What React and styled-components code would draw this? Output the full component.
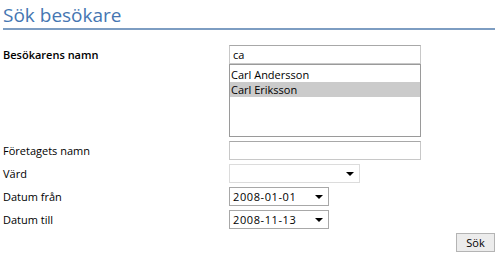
import React from 'react';
import styled, { createGlobalStyle } from 'styled-components';

const Global = createGlobalStyle`
    body {
        margin: 0;
        background: #ffffff;
        font-family: "Open Sans", "DejaVu Sans", sans-serif;
        font-size: 11px;
        color: #000;
    }
`

const Page = styled.div`
    width: 500px;
    height: 269px;
    box-sizing: border-box;
    padding: 4px 4px 0 3px;
`

const Heading = styled.h1`
    margin: 0;
    font-weight: normal;
    font-size: 19px;
    color: #4576b2;
    line-height: 22px;
    padding-bottom: 2px;
    border-bottom: 2px solid #7d9dc2;
    margin-right: 1px;
`

const Form = styled.div`
    display: grid;
    grid-template-columns: 226px 1fr;
    row-gap: 4px;
    margin-top: 15px;
`

const Label = styled.div`
    font-weight: ${p => (p.bold ? 600 : 'normal')};
    align-self: ${p => (p.top ? 'start' : 'center')};
    padding-top: ${p => (p.top ? '2px' : '0')};
`

const Field = styled.div`
    display: flex;
    flex-direction: column;
`

const TextInput = styled.div`
    width: 192px;
    height: 19px;
    box-sizing: border-box;
    border: 1px solid #c8c8c8;
    border-top-color: #a8a8a8;
    padding: 1px 3px;
    line-height: 15px;
`

const ListBox = styled.div`
    width: 192px;
    height: 73px;
    box-sizing: border-box;
    border: 1px solid #9a9a9a;
    padding-top: 2px;
`

const Option = styled.div`
    height: 15px;
    line-height: 15px;
    padding-left: 1px;
    background: ${p => (p.selected ? '#cbcbcb' : 'transparent')};
`

const Select = styled.div`
    width: ${p => p.width}px;
    height: 19px;
    box-sizing: border-box;
    border: 1px solid ${p => (p.empty ? '#dcdcdc' : '#a8a8a8')};
    display: flex;
    align-items: center;
    justify-content: space-between;
    padding: 0 5px 0 3px;
    letter-spacing: 0.6px;
`

const Arrow = styled.span`
    width: 0;
    height: 0;
    border-left: 4px solid transparent;
    border-right: 4px solid transparent;
    border-top: 4px solid #000;
`

const Actions = styled.div`
    display: flex;
    justify-content: flex-end;
    margin-top: 4px;
    padding-right: 1px;
`

const Button = styled.button`
    font-family: inherit;
    font-size: 11px;
    width: 39px;
    height: 19px;
    padding: 0;
    background: #ececec;
    border: 1px solid #b4b4b4;
    color: #000;
`

export default function App() {
    return (
        <Page>
            <Global />
            <Heading>Sök besökare</Heading>
            <Form>
                <Label bold top>Besökarens namn</Label>
                <Field>
                    <TextInput>ca</TextInput>
                    <ListBox>
                        <Option>Carl Andersson</Option>
                        <Option selected>Carl Eriksson</Option>
                    </ListBox>
                </Field>
                <Label>Företagets namn</Label>
                <TextInput />
                <Label>Värd</Label>
                <Select width={131} empty><span /><Arrow /></Select>
                <Label>Datum från</Label>
                <Select width={100}>2008-01-01<Arrow /></Select>
                <Label>Datum till</Label>
                <Select width={100}>2008-11-13<Arrow /></Select>
            </Form>
            <Actions>
                <Button>Sök</Button>
            </Actions>
        </Page>
    );
}
